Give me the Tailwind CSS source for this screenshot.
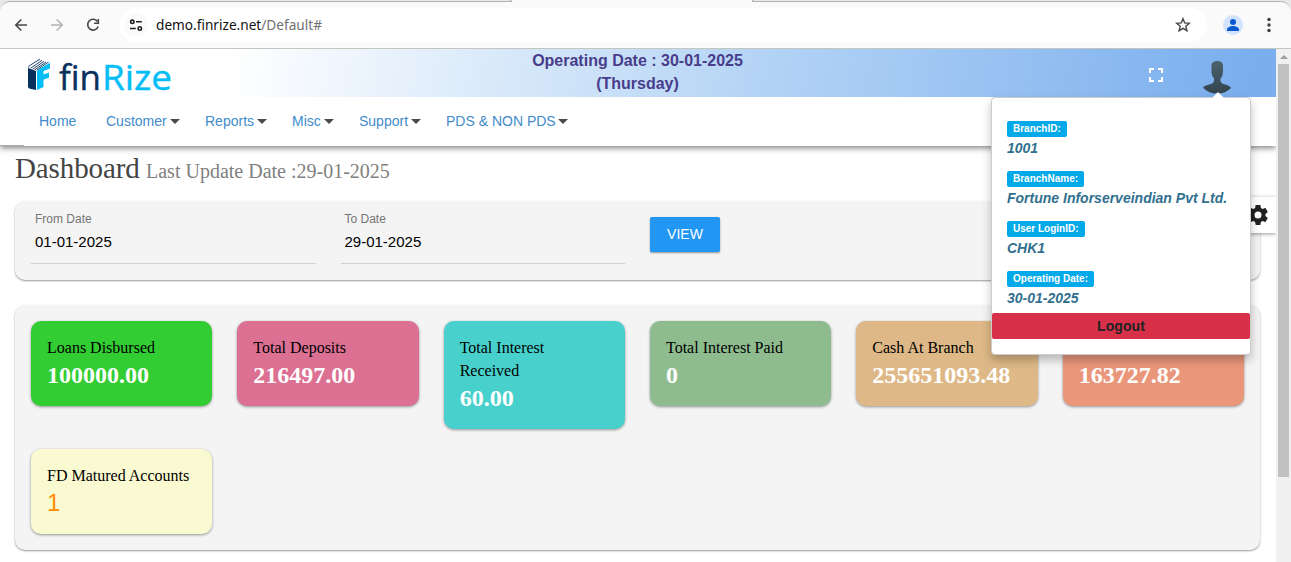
<!DOCTYPE html>
<html lang="en">
<head>
<meta charset="utf-8">
<title>finRize</title>
<script src="https://cdn.jsdelivr.net/npm/@tailwindcss/browser@4"></script>
</head>
<body class="w-[1291px] h-[562px] overflow-hidden bg-white font-['Liberation_Sans',sans-serif] relative flex flex-col">
<!-- Browser toolbar -->
<header class="h-[49px] shrink-0 bg-[#e9e9e9] relative z-20">
  <div class="mt-px h-12 pt-[6px] bg-[#fafafa] rounded-t-[10px] border-t border-b border-t-[#b4b4b4] border-b-[#c5c5c0] flex items-start">
    <svg class="w-[112px] h-[34px] shrink-0" viewBox="0 0 112 34" fill="none" stroke="#474747" stroke-width="1.6">
      <path d="M27 17H16M21.3 11.5L15.8 17l5.5 5.5"/>
      <path d="M51 17h11M56.700 11.500l5.500 5.500-5.500 5.500" stroke="#b3b3b3"/>
      <path d="M97.500 13.500A5.400 5.400 0 1 0 98.200 18.500"/><path d="M98.300 11v4.200h-4.200"/>
    </svg>
    <div class="ml-[7px] w-[1088px] shrink-0 h-[34px] rounded-full bg-white flex items-center">
      <svg class="ml-[5px] w-[24px] h-[24px]" viewBox="0 0 24 24" fill="none" stroke="#1f1f1f" stroke-width="1.6"><circle cx="12" cy="12" r="12" fill="#fafafa" stroke="none"/><circle cx="8.300" cy="8.800" r="1.700"/><path d="M12 8.800h5.800M6 15.500h5.800"/><circle cx="15.800" cy="15.500" r="1.700"/></svg>
      <svg class="ml-[8px] w-[180px] h-[24px]" viewBox="0 0 180 24"><text x="0" y="17" font-family="Noto Sans, sans-serif" font-size="14" textLength="166" lengthAdjust="spacingAndGlyphs" fill="#111">demo.finrize.net<tspan fill="#707070">/Default#</tspan></text></svg>
      <svg class="ml-auto mr-[16px] w-4 h-4" viewBox="0 0 16 16" fill="none" stroke="#474747" stroke-width="1.400"><path d="M8 1.700l1.700 4.200 4.600.35-3.500 3 1.100 4.450L8 11.300l-3.900 2.400 1.100-4.450-3.500-3 4.600-.35z"/></svg>
    </div>
    <svg class="ml-[16px] mt-[7px] w-5 h-5" viewBox="0 0 20 20"><circle cx="10" cy="10" r="10" fill="#d3e3fd"/><circle cx="10" cy="7" r="3" fill="#0b57d0"/><path d="M4 16v-1.500c0-2.300 3.500-3.500 6-3.500s6 1.200 6 3.500V16z" fill="#0b57d0"/></svg>
    <svg class="ml-[16px] mt-[7px] w-4 h-5" viewBox="0 0 16 20" fill="#3c3c3c"><circle cx="10" cy="4.500" r="1.700"/><circle cx="10" cy="10" r="1.700"/><circle cx="10" cy="15.500" r="1.700"/></svg>
  </div>
  <div class="absolute left-[512px] top-0 w-[240px] h-[3px] bg-[#fafafa]"></div>
  <div class="absolute left-[502px] top-[-2px] w-[10px] h-[4px] border-b border-r border-[#b4b4b4] rounded-br-[8px]"></div>
  <div class="absolute left-[751px] top-[-2px] w-[10px] h-[4px] border-b border-l border-[#b4b4b4] rounded-bl-[8px]"></div>
</header>

<div class="flex flex-1 min-h-0">
  <div class="w-[1276px] shrink-0 relative">
    <!-- Site header -->
    <div class="relative z-10 bg-white shadow-[0_2px_6px_0_rgba(0,0,0,0.5)] h-[97px]">
      <div class="h-12 flex items-start bg-[linear-gradient(100deg,#fff_18%,#b3d3f5_60%,#7aaeee_98%)]">
        <svg class="w-[200px] h-12 shrink-0 overflow-visible" viewBox="0 0 200 48">
          <path d="M28 19l8 3v19l-6-1.300q-2-.7-2-2z" fill="#08305c"/>
          <path d="M28 18.500q0-1.500 2-2.500l10-6.500 9 3-2 2-11 7z" fill="#fff"/>
          <path d="M28.500 18.500q0-1.500 2-2.500l9.500-6M30.500 19.300l11.500-8M32.500 20.300l11.500-8M34.500 21l11.500-8M36.500 21.300l12-8.300" stroke="#08305c" stroke-width=".9" fill="none"/>
          <path d="M37 22l3-2.500L50 13.700v5.800l-6.500 2.500v3.500l5.500-2v5l-5.500 2.200V38L37 41z" fill="#05bdf7"/>
          <text x="59" y="40.500" font-family="Open Sans, sans-serif" font-size="35.500" textLength="42" lengthAdjust="spacingAndGlyphs" fill="#08305c" stroke="#08305c" stroke-width=".4">fin</text>
          <text x="102" y="40.500" font-family="Open Sans, sans-serif" font-size="35.500" textLength="70" lengthAdjust="spacingAndGlyphs" fill="#05bdf7" stroke="#05bdf7" stroke-width=".4">Rize</text>
        </svg>
        <div class="ml-[300px] w-[275px] text-center text-[16px] leading-[23px] font-bold text-[#483d8b]">Operating Date : 30-01-2025<br>(Thursday)</div>
        <svg class="ml-[373px] mt-[19px] w-[16px] h-[14px]" viewBox="0 0 16 14" fill="none" stroke="#fff" stroke-width="2"><path d="M2 5V1h4M10 1h4v4M14 9v4h-4M6 13H2V9"/></svg>
        <svg class="ml-[38px] mt-[12px] w-[30px] h-[33px]" viewBox="0 0 30 33"><defs><linearGradient id="bust" x2="0" y2="1"><stop offset="0" stop-color="#4a626d"/><stop offset="1" stop-color="#33444c"/></linearGradient></defs><path fill="url(#bust)" d="M9.500 6q-.5-4 2-5Q13 0 15 0q6 0 6 5v6q0 4-2.500 6.500v2.500q.5 2.500 4.500 3.500 4.500 1 6 3.500-5 5.500-14 5.500T1 26.500q1.500-2 6-3 4.500-1 5-3.500v-3q-2.500-2-2.500-6z"/></svg>
      </div>
      <nav class="h-[49px] pl-[39px] pt-px flex items-center text-[14px] text-[#428bca] pb-px">
        <span class="w-[67px]">Home</span>
        <span class="w-[99px] flex items-center gap-[3px]">Customer<i class="border-x-5 border-x-transparent border-t-5 border-t-[#4a4a4a]"></i></span>
        <span class="w-[87px] flex items-center gap-[3px]">Reports<i class="border-x-5 border-x-transparent border-t-5 border-t-[#4a4a4a]"></i></span>
        <span class="w-[67px] flex items-center gap-[3px]">Misc<i class="border-x-5 border-x-transparent border-t-5 border-t-[#4a4a4a]"></i></span>
        <span class="w-[87px] flex items-center gap-[3px]">Support<i class="border-x-5 border-x-transparent border-t-5 border-t-[#4a4a4a]"></i></span>
        <span class="flex items-center gap-[2px]">PDS &amp; NON PDS<i class="border-x-5 border-x-transparent border-t-5 border-t-[#4a4a4a]"></i></span>
      </nav>
      <div class="absolute left-0 bottom-0 w-6 h-px bg-[#aaa]"></div>
    </div>

    <main class="pl-[15px] pr-4">
      <h1 class="h-[55px] pt-[4px] font-['Liberation_Serif',serif] text-[29px] leading-[36px] text-[#444] whitespace-nowrap"><span class="inline-block w-[131px] tracking-[-0.1px]">Dashboard</span><span class="text-[20px] text-[#808080]">Last Update Date :29-01-2025</span></h1>
      <section class="h-[79px] bg-[#f4f4f4] rounded-[10px] shadow-[0_1px_2px_rgba(0,0,0,0.4)] flex items-start pl-4">
        <div class="w-[285px] h-[63px] border-b border-[#d2d2d2] pl-1 pt-[10px]">
          <div class="text-[12px] leading-[17px] text-[#757575]">From Date</div>
          <div class="text-[15px] leading-[17px] mt-[5px] text-black">01-01-2025</div>
        </div>
        <div class="ml-[25px] w-[284px] h-[63px] border-b border-[#d2d2d2] pl-[3.5px] pt-[10px]">
          <div class="text-[12px] leading-[17px] text-[#757575]">To Date</div>
          <div class="text-[15px] leading-[17px] mt-[5px] text-black">29-01-2025</div>
        </div>
        <button class="ml-[25px] mt-4 w-[70px] h-[35px] rounded-[2px] bg-[#2196f3] text-white text-[14px] shadow-[0_1px_2px_rgba(0,0,0,0.4)]">VIEW</button>
      </section>
      <section class="mt-[25px] h-[245px] bg-[#f4f4f4] rounded-[10px] shadow-[0_1px_2px_rgba(0,0,0,0.4)] p-4 grid grid-cols-6 gap-x-[25px] gap-y-[20px] items-start content-start font-['Liberation_Serif',serif] text-[16px] leading-[23px] text-black">
        <div class="bg-[#32cd32] h-[85px] rounded-[10px] shadow-[0_1px_3px_rgba(0,0,0,0.4)] p-4 pt-[15px]">Loans Disbursed<div class="text-[24px] leading-[33px] font-bold text-white">100000.00</div></div>
        <div class="bg-[#db7093] h-[85px] rounded-[10px] shadow-[0_1px_3px_rgba(0,0,0,0.4)] p-4 pt-[15px]">Total Deposits<div class="text-[24px] leading-[33px] font-bold text-white">216497.00</div></div>
        <div class="bg-[#48d1cc] h-[108px] rounded-[10px] shadow-[0_1px_3px_rgba(0,0,0,0.4)] p-4 pt-[15px]">Total Interest<br>Received<div class="text-[24px] leading-[33px] font-bold text-white">60.00</div></div>
        <div class="bg-[#8fbc8f] h-[85px] rounded-[10px] shadow-[0_1px_3px_rgba(0,0,0,0.4)] p-4 pt-[15px]">Total Interest Paid<div class="text-[24px] leading-[33px] font-bold text-white">0</div></div>
        <div class="bg-[#deb887] h-[85px] rounded-[10px] shadow-[0_1px_3px_rgba(0,0,0,0.4)] p-4 pt-[15px]">Cash At Branch<div class="text-[24px] leading-[33px] font-bold text-white">255651093.48</div></div>
        <div class="bg-[#e9967a] h-[85px] rounded-[10px] shadow-[0_1px_3px_rgba(0,0,0,0.4)] p-4 pt-[38px]"><div class="text-[24px] leading-[33px] font-bold text-white">163727.82</div></div>
        <div class="bg-[#fafad2] h-[85px] rounded-[10px] shadow-[0_1px_3px_rgba(0,0,0,0.4)] p-4 pt-[15px] whitespace-nowrap">FD Matured Accounts<div class="text-[24px] leading-[31px] font-['Liberation_Sans',sans-serif] text-[#ff8c00]">1</div></div>
      </section>
    </main>

    <!-- Settings tab -->
    <div class="absolute left-[1240px] top-[148px] w-9 h-[36px] bg-white shadow-[0_1px_4px_rgba(0,0,0,0.4)]">
      <svg class="absolute left-[6px] top-[6px] w-6 h-6" viewBox="0 0 24 24" fill="#212121"><path d="M19.430 12.980c.04-.32.07-.64.07-.98s-.03-.66-.07-.98l2.110-1.650c.19-.15.24-.42.12-.64l-2-3.460c-.12-.22-.39-.3-.61-.22l-2.490 1c-.52-.4-1.080-.73-1.690-.98l-.38-2.650C14.460 2.180 14.250 2 14 2h-4c-.25 0-.46.18-.49.42l-.38 2.650c-.61.25-1.170.59-1.690.98l-2.490-1c-.23-.09-.49 0-.61.22l-2 3.460c-.13.22-.07.49.12.64l2.110 1.650c-.04.32-.07.65-.07.98s.03.66.07.98l-2.110 1.650c-.19.15-.24.42-.12.64l2 3.460c.12.22.39.3.61.22l2.490-1c.52.4 1.080.73 1.690.98l.38 2.650c.03.24.24.42.49.42h4c.25 0 .46-.18.49-.42l.38-2.650c.61-.25 1.170-.59 1.690-.98l2.490 1c.23.09.49 0 .61-.22l2-3.460c.12-.22.07-.49-.12-.64zM12 15.500a3.500 3.500 0 1 1 0-7 3.500 3.500 0 0 1 0 7z"/></svg>
    </div>

    <!-- Profile menu -->
    <div class="absolute z-20 left-[991px] top-[48px] w-[260px] h-[258px] bg-white border border-[#ccc] rounded-[4px] shadow-[0_5px_10px_rgba(0,0,0,0.25)] pt-[16px]">
      <svg class="absolute left-[219px] top-[-7px] w-[14px] h-[8px]" viewBox="0 0 14 8"><path d="M0 8l7-7 7 7z" fill="#fff"/></svg>
      <dl class="pl-[15px] text-[14px] leading-[20px] font-bold text-[#31708f]">
        <dt class="h-[23px] flex items-end"><span class="h-4 px-[6px] rounded-[2px] bg-[#03a9e8] text-white text-[10px] leading-[16px]">BranchID:</span></dt>
        <dd class="italic h-[27px] pt-[1px] whitespace-nowrap">1001</dd>
        <dt class="h-[23px] flex items-end"><span class="h-4 px-[6px] rounded-[2px] bg-[#03a9e8] text-white text-[10px] leading-[16px]">BranchName:</span></dt>
        <dd class="italic h-[27px] pt-[1px] whitespace-nowrap">Fortune Inforserveindian Pvt Ltd.</dd>
        <dt class="h-[23px] flex items-end"><span class="h-4 px-[6px] rounded-[2px] bg-[#03a9e8] text-white text-[10px] leading-[16px]">User LoginID:</span></dt>
        <dd class="italic h-[27px] pt-[1px] whitespace-nowrap">CHK1</dd>
        <dt class="h-[23px] flex items-end"><span class="h-4 px-[6px] rounded-[2px] bg-[#03a9e8] text-white text-[10px] leading-[16px]">Operating Date:</span></dt>
        <dd class="italic h-[26px] pt-[1px] whitespace-nowrap">30-01-2025</dd>
      </dl>
      <button class="block w-full h-[26px] rounded-[2px] bg-[#d9304a] text-[#222] text-[14px] font-bold tracking-[0.1px]">Logout</button>
    </div>
  </div>

  <!-- Scrollbar -->
  <div class="w-[15px] bg-[#f0f0f0] flex flex-col items-center relative z-30">
    <i class="mt-[6px] border-x-4 border-x-transparent border-b-4 border-b-[#a0a0a0]"></i>
    <div class="mt-[5px] w-[11px] h-[413px] bg-[#c1c1c1]"></div>
  </div>
</div>
</body>
</html>
